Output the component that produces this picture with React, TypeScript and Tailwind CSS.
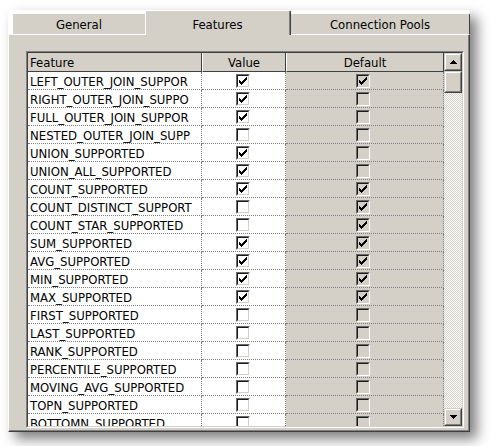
import React from "react";

type Row = { name: string; value: boolean; def: boolean };

const rows: Row[] = [
  { name: "LEFT_OUTER_JOIN_SUPPOR", value: true, def: true },
  { name: "RIGHT_OUTER_JOIN_SUPPO", value: true, def: false },
  { name: "FULL_OUTER_JOIN_SUPPOR", value: true, def: false },
  { name: "NESTED_OUTER_JOIN_SUPP", value: false, def: false },
  { name: "UNION_SUPPORTED", value: true, def: false },
  { name: "UNION_ALL_SUPPORTED", value: true, def: false },
  { name: "COUNT_SUPPORTED", value: true, def: true },
  { name: "COUNT_DISTINCT_SUPPORT", value: false, def: true },
  { name: "COUNT_STAR_SUPPORTED", value: false, def: true },
  { name: "SUM_SUPPORTED", value: true, def: true },
  { name: "AVG_SUPPORTED", value: true, def: true },
  { name: "MIN_SUPPORTED", value: true, def: true },
  { name: "MAX_SUPPORTED", value: true, def: true },
  { name: "FIRST_SUPPORTED", value: false, def: false },
  { name: "LAST_SUPPORTED", value: false, def: false },
  { name: "RANK_SUPPORTED", value: false, def: false },
  { name: "PERCENTILE_SUPPORTED", value: false, def: false },
  { name: "MOVING_AVG_SUPPORTED", value: false, def: false },
  { name: "TOPN_SUPPORTED", value: false, def: false },
  { name: "BOTTOMN_SUPPORTED", value: false, def: false },
];

function CheckBox({ checked, gray }: { checked: boolean; gray: boolean }) {
  return (
    <div className="w-[14px] h-[14px] border border-t-[#6a6a6a] border-l-[#6a6a6a] border-r-white border-b-white">
      <div
        className={
          gray
            ? "relative w-full h-full border border-t-[#1a1a1a] border-l-[#1a1a1a] border-r-[#d4d0c8] border-b-[#d4d0c8] bg-[#d4d0c8]"
            : "relative w-full h-full border border-t-[#1a1a1a] border-l-[#1a1a1a] border-r-[#d4d0c8] border-b-[#d4d0c8] bg-white"
        }
      >
        {checked && (
          <svg
            width="8"
            height="8"
            viewBox="0 0 8 8"
            shapeRendering="crispEdges"
            className="absolute left-[1px] top-[1px]"
          >
            <path
              d="M0 3h1v3H0z M1 4h1v3H1z M2 5h1v3H2z M3 4h1v3H3z M4 3h1v3H4z M5 2h1v3H5z M6 1h1v3H6z M7 0h1v3H7z"
              fill="#000"
            />
          </svg>
        )}
      </div>
    </div>
  );
}

function ScrollButton({ dir }: { dir: "up" | "down" }) {
  return (
    <div className="w-[18px] h-[18px] border border-t-[#d4d0c8] border-l-[#d4d0c8] border-r-[#404040] border-b-[#404040]">
      <div className="w-full h-full border border-t-white border-l-white border-r-[#808080] border-b-[#808080] bg-[#d4d0c8] flex items-center justify-center">
        <svg width="7" height="4" viewBox="0 0 7 4" shapeRendering="crispEdges">
          {dir === "up" ? (
            <path d="M3 0h1v1H3z M2 1h3v1H2z M1 2h5v1H1z M0 3h7v1H0z" fill="#000" />
          ) : (
            <path d="M0 0h7v1H0z M1 1h5v1H1z M2 2h3v1H2z M3 3h1v1H3z" fill="#000" />
          )}
        </svg>
      </div>
    </div>
  );
}

export default function App() {
  const font = { fontFamily: '"DejaVu Sans Condensed", "DejaVu Sans", "Liberation Sans", sans-serif' };
  return (
    <div className="w-[494px] h-[446px] bg-white overflow-hidden pl-[8px] pt-[10px]" style={font}>
      <div className="w-[462px] h-[422px] flex flex-col shadow-[7px_7px_12px_rgba(0,0,0,0.5)] text-[13px] text-black">
        {/* Tabs */}
        <div className="h-[24px] flex items-end bg-white">
          <div className="ml-[4px] w-[133px] h-[21px] bg-[#d4d0c8] border-t border-l border-t-white border-l-white rounded-tl-[2px] flex items-center justify-center leading-none pt-[1px]">
            General
          </div>
          <div className="relative z-10 -mb-px w-[146px] h-[25px] bg-[#d4d0c8] border-t border-l border-r border-t-white border-l-white border-r-[#404040] rounded-t-[2px]">
            <div className="w-full h-full border-r border-r-[#808080] flex items-center justify-center leading-none pt-[3px]">
              Features
            </div>
          </div>
          <div className="w-[179px] h-[21px] bg-[#d4d0c8] border-t border-r border-t-white border-r-[#404040] rounded-tr-[2px] flex items-center justify-center leading-none pt-[1px]">
            Connection Pools
          </div>
        </div>

        {/* Panel */}
        <div className="h-[398px] border border-t-white border-l-white border-r-[#404040] border-b-[#404040]">
          <div className="w-full h-full border-r border-b border-r-[#808080] border-b-[#808080] bg-[#d4d0c8] pl-[17px] pt-[16px]">
            {/* Grid */}
            <div className="w-[438px] h-[377px] border border-t-[#808080] border-l-[#808080] border-r-white border-b-white">
              <div className="w-full h-full border border-t-[#404040] border-l-[#404040] border-r-[#d4d0c8] border-b-[#d4d0c8] flex overflow-hidden">
                <div className="w-[416px] h-full flex flex-col overflow-hidden">
                  {/* Header */}
                  <div className="h-[19px] shrink-0 flex bg-[#d4d0c8]">
                    <div className="w-[174px] h-full border-r border-b border-r-[#404040] border-b-[#404040] flex items-center pl-[2px] leading-none">
                      Feature
                    </div>
                    <div className="w-[84px] h-full border-r border-b border-l border-l-white border-r-[#404040] border-b-[#404040] flex items-center justify-center leading-none">
                      Value
                    </div>
                    <div className="w-[158px] h-full border-r border-b border-l border-l-white border-r-[#404040] border-b-[#404040] flex items-center justify-center leading-none">
                      Default
                    </div>
                  </div>
                  {/* Rows */}
                  {rows.map((r) => (
                    <div key={r.name} className="h-[18px] shrink-0 flex">
                      <div className="w-[174px] h-full bg-white border-r border-b border-dotted border-[#808080] pl-[2px] pt-[1px] leading-[17px] whitespace-nowrap overflow-hidden">
                        {r.name}
                      </div>
                      <div className="w-[84px] h-full bg-white border-r border-b border-dotted border-[#808080] pl-[34px] pt-[2px]">
                        <CheckBox checked={r.value} gray={false} />
                      </div>
                      <div className="w-[158px] h-full bg-[#d4d0c8] border-r border-b border-dotted border-[#808080] pl-[70px] pt-[2px]">
                        <CheckBox checked={r.def} gray={true} />
                      </div>
                    </div>
                  ))}
                </div>
                {/* Scrollbar */}
                <div className="w-[18px] h-full flex flex-col">
                  <ScrollButton dir="up" />
                  <div className="w-[18px] h-[22px] border border-t-[#d4d0c8] border-l-[#d4d0c8] border-r-[#404040] border-b-[#404040]">
                    <div className="w-full h-full border border-t-white border-l-white border-r-[#808080] border-b-[#808080] bg-[#d4d0c8]" />
                  </div>
                  <div className="flex-1 bg-[repeating-conic-gradient(#d4d0c8_0_25%,#ffffff_0_50%)] bg-[length:2px_2px]" />
                  <ScrollButton dir="down" />
                </div>
              </div>
            </div>
          </div>
        </div>
      </div>
    </div>
  );
}
